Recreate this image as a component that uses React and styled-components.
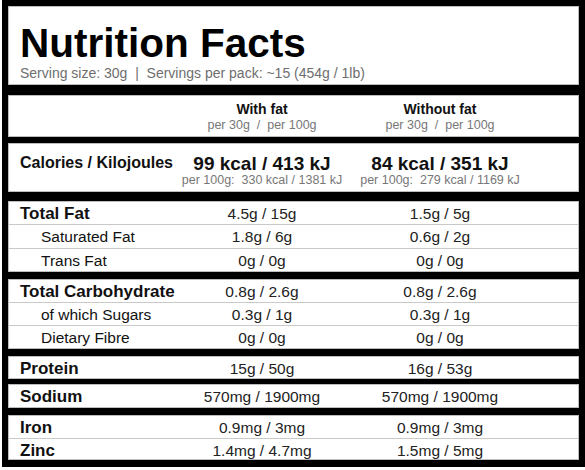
import React from "react";
import styled, { createGlobalStyle } from "styled-components";

const Global = createGlobalStyle`
  html, body { margin: 0; padding: 0; background: #fff; }
  body { font-family: "Liberation Sans", Arial, sans-serif; color: #111; }
`;

const Label = styled.div`
  box-sizing: border-box;
  margin-left: 2px;
  width: 583px;
  height: 467px;
  background: #000;
  padding: 6px;
  display: flex;
  flex-direction: column;
`;

const Section = styled.div`
  box-sizing: border-box;
  background: #fff;
  border: 1px solid #bdbdbd;
  margin-top: ${(p) => p.$gap || 0}px;
  height: ${(p) => p.$h}px;
  display: flex;
  flex-direction: column;
`;

const Header = styled(Section)`
  padding: 16px 0 0 11px;
`;

const Title = styled.h1`
  margin: 0;
  font-size: 40.5px;
  line-height: 40px;
  font-weight: 700;
  color: #000;
`;

const Subtitle = styled.div`
  margin-top: 2px;
  font-size: 14px;
  line-height: 16px;
  color: #6e6e6e;
  white-space: pre;
`;

const Row = styled.div`
  box-sizing: border-box;
  display: grid;
  grid-template-columns: 164px 178px 178px 1fr;
  align-items: center;
  flex: 1;
  padding-top: 2px;
  border-top: ${(p) => (p.$first ? "none" : "1px solid #c9c9c9")};
`;

const Name = styled.div`
  padding-left: ${(p) => (p.$indent ? 32 : 11)}px;
  font-size: ${(p) => (p.$bold ? 17 : 15.5)}px;
  font-weight: ${(p) => (p.$bold ? 700 : 400)};
  white-space: nowrap;
  color: #111;
`;

const Value = styled.div`
  text-align: center;
  font-size: 15.5px;
  color: #222;
  white-space: nowrap;
`;

const ColHeadRow = styled.div`
  display: grid;
  grid-template-columns: 164px 178px 178px 1fr;
  padding-top: 5px;
`;

const ColHead = styled.div`
  text-align: center;
`;

const ColTitle = styled.div`
  font-size: 14px;
  font-weight: 700;
  line-height: 17px;
  color: #111;
`;

const Per = styled.div`
  font-size: 12.5px;
  line-height: 14px;
  color: #777;
  white-space: pre;
`;

const CalRow = styled.div`
  display: grid;
  grid-template-columns: 164px 178px 178px 1fr;
  padding-top: 9px;
`;

const CalName = styled.div`
  padding-left: 11px;
  font-size: 16px;
  font-weight: 700;
  line-height: 20px;
  white-space: nowrap;
`;

const CalCell = styled.div`
  text-align: center;
`;

const CalBig = styled.div`
  font-size: 19px;
  font-weight: 700;
  line-height: 21px;
  color: #111;
`;

const CalSmall = styled.div`
  font-size: 12.5px;
  line-height: 13px;
  color: #777;
  white-space: pre;
`;

const groups = [
  {
    gap: 9,
    h: 71,
    rows: [
      ["Total Fat", "4.5g / 15g", "1.5g / 5g", true],
      ["Saturated Fat", "1.8g / 6g", "0.6g / 2g"],
      ["Trans Fat", "0g / 0g", "0g / 0g"],
    ],
  },
  {
    gap: 7,
    h: 70,
    rows: [
      ["Total Carbohydrate", "0.8g / 2.6g", "0.8g / 2.6g", true],
      ["of which Sugars", "0.3g / 1g", "0.3g / 1g"],
      ["Dietary Fibre", "0g / 0g", "0g / 0g"],
    ],
  },
  { gap: 7, h: 23, rows: [["Protein", "15g / 50g", "16g / 53g", true]] },
  { gap: 5, h: 24, rows: [["Sodium", "570mg / 1900mg", "570mg / 1900mg", true]] },
  {
    gap: 7,
    h: 45,
    rows: [
      ["Iron", "0.9mg / 3mg", "0.9mg / 3mg", true],
      ["Zinc", "1.4mg / 4.7mg", "1.5mg / 5mg", true],
    ],
  },
];

export default function App() {
  return (
    <>
      <Global />
      <Label>
        <Header $h={79}>
          <Title>Nutrition Facts</Title>
          <Subtitle>{"Serving size: 30g  |  Servings per pack: ~15 (454g / 1lb)"}</Subtitle>
        </Header>
        <Section $gap={10} $h={42}>
          <ColHeadRow>
            <div />
            <ColHead>
              <ColTitle>With fat</ColTitle>
              <Per>{"per 30g  /  per 100g"}</Per>
            </ColHead>
            <ColHead>
              <ColTitle>Without fat</ColTitle>
              <Per>{"per 30g  /  per 100g"}</Per>
            </ColHead>
          </ColHeadRow>
        </Section>
        <Section $gap={6} $h={49}>
          <CalRow>
            <CalName>Calories / Kilojoules</CalName>
            <CalCell>
              <CalBig>99 kcal / 413 kJ</CalBig>
              <CalSmall>{"per 100g:  330 kcal / 1381 kJ"}</CalSmall>
            </CalCell>
            <CalCell>
              <CalBig>84 kcal / 351 kJ</CalBig>
              <CalSmall>{"per 100g:  279 kcal / 1169 kJ"}</CalSmall>
            </CalCell>
          </CalRow>
        </Section>
        {groups.map((g, gi) => (
          <Section key={gi} $gap={g.gap} $h={g.h}>
            {g.rows.map(([name, a, b, bold], ri) => (
              <Row key={ri} $first={ri === 0}>
                <Name $bold={bold} $indent={!bold}>{name}</Name>
                <Value>{a}</Value>
                <Value>{b}</Value>
                <div />
              </Row>
            ))}
          </Section>
        ))}
      </Label>
    </>
  );
}
